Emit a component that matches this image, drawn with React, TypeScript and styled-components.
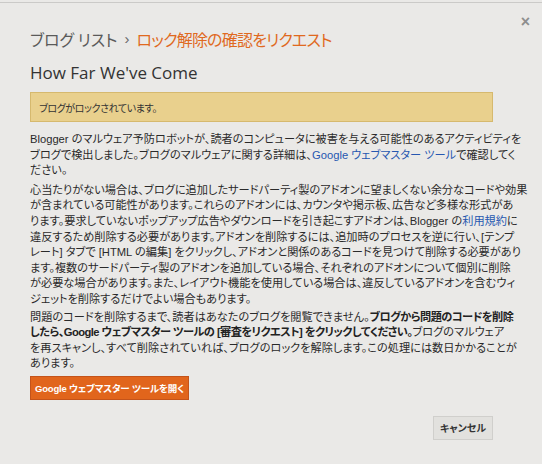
import React from "react";
import styled, { createGlobalStyle } from "styled-components";

const GlobalStyle = createGlobalStyle`
  html, body { margin: 0; padding: 0; background: #eae9e7; }
  body { font-family: "Liberation Sans", "Noto Sans CJK JP", sans-serif; }
`;

const Dialog = styled.div`
  position: relative;
  box-sizing: border-box;
  margin-top: 2px;
  height: 462px;
  border-top: 1px solid #cbcac8;
  padding: 0 49px 0 30px;
  display: flex;
  flex-direction: column;
  color: #2b2b2b;
`;

const Close = styled.span`
  position: absolute;
  top: 10px;
  right: 12px;
  font-family: "Liberation Sans", sans-serif;
  font-size: 16px;
  font-weight: bold;
  color: #8e8e8e;
`;

const Breadcrumb = styled.div`
  margin-top: 25px;
  font-family: "Noto Sans CJK JP", sans-serif;
  font-feature-settings: "palt";
  font-size: 16px;
  line-height: 22px;
  color: #5a5a5a;
  display: flex;
  gap: 7px;
  align-items: center;
`;

const Sep = styled.span`
  font-family: "Liberation Sans", sans-serif;
  font-size: 15px;
  color: #666;
`;

const Current = styled.span`
  color: #e0691f;
  letter-spacing: -0.8px;
`;

const Title = styled.h1`
  margin: 11px 0 0;
  font-family: "Open Sans", sans-serif;
  font-weight: normal;
  font-size: 17px;
  line-height: 24px;
  color: #333;
`;

const Notice = styled.div`
  margin-top: 7px;
  box-sizing: border-box;
  height: 30px;
  border: 1px solid #d6b96e;
  background: #e9d08d;
  padding: 0 8px;
  display: flex;
  align-items: center;
  font-size: 10px;
  letter-spacing: -0.4px;
  font-feature-settings: "palt";
  color: #333;
`;

const Para = styled.p`
  margin: 0 0 2px;
  font-size: 11.2px;
  line-height: 15.6px;
  white-space: nowrap;
  font-feature-settings: "palt";
  color: #2a2a2a;
  &:first-of-type { margin: 10px 0 4px; }
`;

const Link = styled.a`
  color: #2657b0;
  text-decoration: none;
`;

const Strong = styled.b`
  font-weight: bold;
  color: #222;
  letter-spacing: -0.55px;
`;

const PrimaryButton = styled.button`
  align-self: flex-start;
  margin-top: 2px;
  height: 24px;
  width: 159px;
  box-sizing: border-box;
  border: 1px solid #c4531a;
  background: #e1651c;
  color: #fff;
  font-family: "Liberation Sans", "Noto Sans CJK JP", sans-serif;
  font-feature-settings: "palt";
  font-size: 9.5px;
  letter-spacing: -0.2px;
  font-weight: bold;
  white-space: nowrap;
  padding: 0;
  text-align: center;
`;

const Footer = styled.div`
  margin-top: 16px;
  display: flex;
  justify-content: flex-end;
`;

const CancelButton = styled.button`
  height: 24px;
  width: 60px;
  box-sizing: border-box;
  border: 1px solid #d0cfcc;
  background: #e2e1de;
  color: #333;
  font-family: "Noto Sans CJK JP", sans-serif;
  font-feature-settings: "palt";
  font-size: 10px;
  font-weight: bold;
  padding: 0;
`;

export default function App() {
  return (
    <>
      <GlobalStyle />
      <Dialog>
        <Close>×</Close>
        <Breadcrumb>
          <span>ブログ リスト</span>
          <Sep>›</Sep>
          <Current>ロック解除の確認をリクエスト</Current>
        </Breadcrumb>
        <Title>How Far We've Come</Title>
        <Notice>ブログがロックされています。</Notice>
        <Para>
          Blogger のマルウェア予防ロボットが、読者のコンピュータに被害を与える可能性のあるアクティビティを
          <br />
          ブログで検出しました。ブログのマルウェアに関する詳細は、
          <Link href="#">Google ウェブマスター ツール</Link>で確認してく
          <br />
          ださい。
        </Para>
        <Para>
          心当たりがない場合は、ブログに追加したサードパーティ製のアドオンに望ましくない余分なコードや効果
          <br />
          が含まれている可能性があります。これらのアドオンには、カウンタや掲示板、広告など多様な形式があ
          <br />
          ります。要求していないポップアップ広告やダウンロードを引き起こすアドオンは、Blogger の
          <Link href="#">利用規約</Link>に
          <br />
          違反するため削除する必要があります。アドオンを削除するには、追加時のプロセスを逆に行い、[テンプ
          <br />
          レート] タブで [HTML の編集] をクリックし、アドオンと関係のあるコードを見つけて削除する必要があり
          <br />
          ます。複数のサードパーティ製のアドオンを追加している場合、それぞれのアドオンについて個別に削除
          <br />
          が必要な場合があります。また、レイアウト機能を使用している場合は、違反しているアドオンを含むウィ
          <br />
          ジェットを削除するだけでよい場合もあります。
        </Para>
        <Para>
          問題のコードを削除するまで、読者はあなたのブログを閲覧できません。
          <Strong>ブログから問題のコードを削除</Strong>
          <br />
          <Strong>したら、Google ウェブマスター ツールの [審査をリクエスト] をクリックしてください。</Strong>
          ブログのマルウェア
          <br />
          を再スキャンし、すべて削除されていれば、ブログのロックを解除します。この処理には数日かかることが
          <br />
          あります。
        </Para>
        <PrimaryButton>Google ウェブマスター ツールを開く</PrimaryButton>
        <Footer>
          <CancelButton>キャンセル</CancelButton>
        </Footer>
      </Dialog>
    </>
  );
}
